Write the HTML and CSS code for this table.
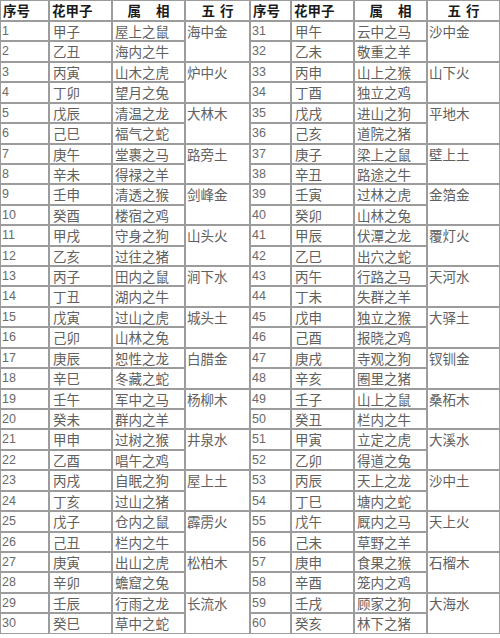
FILE: index.html
```html
<!DOCTYPE html>
<html lang="zh-CN">
<head>
<meta charset="utf-8">
<link rel="stylesheet" href="styles.css">
</head>
<body>
<table class="tbl">
<colgroup>
<col class="c-no1"><col class="c-gz"><col class="c-sx"><col class="c-wx1">
<col class="c-no2"><col class="c-gz"><col class="c-sx"><col class="c-wx2">
</colgroup>
<thead>
<tr class="hd">
<th class="no">序号</th><th class="gz">花甲子</th><th class="mid wide">属 相</th><th class="mid">五 行</th>
<th class="no">序号</th><th class="gz">花甲子</th><th class="mid wide">属 相</th><th class="mid">五 行</th>
</tr>
</thead>
<tbody>
<tr><td class="no">1</td><td class="gz">甲子</td><td class="sx">屋上之鼠</td><td class="wx" rowspan="2">海中金</td><td class="no">31</td><td class="gz">甲午</td><td class="sx">云中之马</td><td class="wx" rowspan="2">沙中金</td></tr>
<tr><td class="no">2</td><td class="gz">乙丑</td><td class="sx">海内之牛</td><td class="no">32</td><td class="gz">乙未</td><td class="sx">敬重之羊</td></tr>
<tr><td class="no">3</td><td class="gz">丙寅</td><td class="sx">山木之虎</td><td class="wx" rowspan="2">炉中火</td><td class="no">33</td><td class="gz">丙申</td><td class="sx">山上之猴</td><td class="wx" rowspan="2">山下火</td></tr>
<tr><td class="no">4</td><td class="gz">丁卯</td><td class="sx">望月之兔</td><td class="no">34</td><td class="gz">丁酉</td><td class="sx">独立之鸡</td></tr>
<tr><td class="no">5</td><td class="gz">戊辰</td><td class="sx">清温之龙</td><td class="wx" rowspan="2">大林木</td><td class="no">35</td><td class="gz">戊戌</td><td class="sx">进山之狗</td><td class="wx" rowspan="2">平地木</td></tr>
<tr><td class="no">6</td><td class="gz">己巳</td><td class="sx">福气之蛇</td><td class="no">36</td><td class="gz">己亥</td><td class="sx">道院之猪</td></tr>
<tr><td class="no">7</td><td class="gz">庚午</td><td class="sx">堂裹之马</td><td class="wx" rowspan="2">路旁土</td><td class="no">37</td><td class="gz">庚子</td><td class="sx">梁上之鼠</td><td class="wx" rowspan="2">壁上土</td></tr>
<tr><td class="no">8</td><td class="gz">辛未</td><td class="sx">得禄之羊</td><td class="no">38</td><td class="gz">辛丑</td><td class="sx">路途之牛</td></tr>
<tr><td class="no">9</td><td class="gz">壬申</td><td class="sx">清透之猴</td><td class="wx" rowspan="2">剑峰金</td><td class="no">39</td><td class="gz">壬寅</td><td class="sx">过林之虎</td><td class="wx" rowspan="2">金箔金</td></tr>
<tr><td class="no">10</td><td class="gz">癸酉</td><td class="sx">楼宿之鸡</td><td class="no">40</td><td class="gz">癸卯</td><td class="sx">山林之兔</td></tr>
<tr><td class="no">11</td><td class="gz">甲戌</td><td class="sx">守身之狗</td><td class="wx" rowspan="2">山头火</td><td class="no">41</td><td class="gz">甲辰</td><td class="sx">伏潭之龙</td><td class="wx" rowspan="2">覆灯火</td></tr>
<tr><td class="no">12</td><td class="gz">乙亥</td><td class="sx">过往之猪</td><td class="no">42</td><td class="gz">乙巳</td><td class="sx">出穴之蛇</td></tr>
<tr><td class="no">13</td><td class="gz">丙子</td><td class="sx">田内之鼠</td><td class="wx" rowspan="2">涧下水</td><td class="no">43</td><td class="gz">丙午</td><td class="sx">行路之马</td><td class="wx" rowspan="2">天河水</td></tr>
<tr><td class="no">14</td><td class="gz">丁丑</td><td class="sx">湖内之牛</td><td class="no">44</td><td class="gz">丁未</td><td class="sx">失群之羊</td></tr>
<tr><td class="no">15</td><td class="gz">戊寅</td><td class="sx">过山之虎</td><td class="wx" rowspan="2">城头土</td><td class="no">45</td><td class="gz">戊申</td><td class="sx">独立之猴</td><td class="wx" rowspan="2">大驿土</td></tr>
<tr><td class="no">16</td><td class="gz">己卯</td><td class="sx">山林之兔</td><td class="no">46</td><td class="gz">己酉</td><td class="sx">报晓之鸡</td></tr>
<tr><td class="no">17</td><td class="gz">庚辰</td><td class="sx">恕性之龙</td><td class="wx" rowspan="2">白腊金</td><td class="no">47</td><td class="gz">庚戌</td><td class="sx">寺观之狗</td><td class="wx" rowspan="2">钗钏金</td></tr>
<tr><td class="no">18</td><td class="gz">辛巳</td><td class="sx">冬藏之蛇</td><td class="no">48</td><td class="gz">辛亥</td><td class="sx">圈里之猪</td></tr>
<tr><td class="no">19</td><td class="gz">壬午</td><td class="sx">军中之马</td><td class="wx" rowspan="2">杨柳木</td><td class="no">49</td><td class="gz">壬子</td><td class="sx">山上之鼠</td><td class="wx" rowspan="2">桑柘木</td></tr>
<tr><td class="no">20</td><td class="gz">癸未</td><td class="sx">群内之羊</td><td class="no">50</td><td class="gz">癸丑</td><td class="sx">栏内之牛</td></tr>
<tr><td class="no">21</td><td class="gz">甲申</td><td class="sx">过树之猴</td><td class="wx" rowspan="2">井泉水</td><td class="no">51</td><td class="gz">甲寅</td><td class="sx">立定之虎</td><td class="wx" rowspan="2">大溪水</td></tr>
<tr><td class="no">22</td><td class="gz">乙酉</td><td class="sx">唱午之鸡</td><td class="no">52</td><td class="gz">乙卯</td><td class="sx">得道之兔</td></tr>
<tr><td class="no">23</td><td class="gz">丙戌</td><td class="sx">自眠之狗</td><td class="wx" rowspan="2">屋上土</td><td class="no">53</td><td class="gz">丙辰</td><td class="sx">天上之龙</td><td class="wx" rowspan="2">沙中土</td></tr>
<tr><td class="no">24</td><td class="gz">丁亥</td><td class="sx">过山之猪</td><td class="no">54</td><td class="gz">丁巳</td><td class="sx">塘内之蛇</td></tr>
<tr><td class="no">25</td><td class="gz">戊子</td><td class="sx">仓内之鼠</td><td class="wx" rowspan="2">霹雳火</td><td class="no">55</td><td class="gz">戊午</td><td class="sx">厩内之马</td><td class="wx" rowspan="2">天上火</td></tr>
<tr><td class="no">26</td><td class="gz">己丑</td><td class="sx">栏内之牛</td><td class="no">56</td><td class="gz">己未</td><td class="sx">草野之羊</td></tr>
<tr><td class="no">27</td><td class="gz">庚寅</td><td class="sx">出山之虎</td><td class="wx" rowspan="2">松柏木</td><td class="no">57</td><td class="gz">庚申</td><td class="sx">食果之猴</td><td class="wx" rowspan="2">石榴木</td></tr>
<tr><td class="no">28</td><td class="gz">辛卯</td><td class="sx">蟾窟之兔</td><td class="no">58</td><td class="gz">辛酉</td><td class="sx">笼内之鸡</td></tr>
<tr><td class="no">29</td><td class="gz">壬辰</td><td class="sx">行雨之龙</td><td class="wx" rowspan="2">长流水</td><td class="no">59</td><td class="gz">壬戌</td><td class="sx">顾家之狗</td><td class="wx" rowspan="2">大海水</td></tr>
<tr><td class="no">30</td><td class="gz">癸巳</td><td class="sx">草中之蛇</td><td class="no">60</td><td class="gz">癸亥</td><td class="sx">林下之猪</td></tr>
</tbody>
</table>
</body>
</html>
```
FILE: styles.css
```css
html, body {
  margin: 0;
  padding: 0;
  background: #ffffff;
}
body {
  width: 500px;
  height: 638px;
  overflow: hidden;
}
.tbl {
  width: 500px;
  table-layout: fixed;
  border-collapse: separate;
  border-spacing: 0;
  font-family: "Noto Sans CJK SC", sans-serif;
  font-size: 13.5px;
  color: #606060;
}
.c-no1 { width: 49px; }
.c-gz { width: 63px; }
.c-sx { width: 73px; }
.c-wx1 { width: 65px; }
.c-no2 { width: 41px; }
.c-wx2 { width: 73px; }

.tbl th,
.tbl td {
  border: 1px solid #9c9c9c;
  padding: 1px 0 0 2px;
  vertical-align: top;
  text-align: left;
  line-height: 17px;
  white-space: nowrap;
  overflow: hidden;
}
.hd th {
  height: 19px;
  padding-top: 0;
  color: #1a1a1a;
  font-weight: bold;
  font-size: 13.5px;
  line-height: 19px;
  vertical-align: middle;
}
.hd th.mid {
  text-align: center;
  padding: 0;
  word-spacing: 2px;
}
.hd th.wide {
  word-spacing: 12px;
}
.tbl tbody tr {
  height: 20.43px;
}
.tbl td.no {
  font-family: "Liberation Sans", sans-serif;
  font-size: 12.5px;
  color: #6a6a6a;
  padding-left: 1px;
}
.tbl td.gz {
  padding-left: 3px;
}
.tbl td.wx {
  padding-left: 1px;
}
```
